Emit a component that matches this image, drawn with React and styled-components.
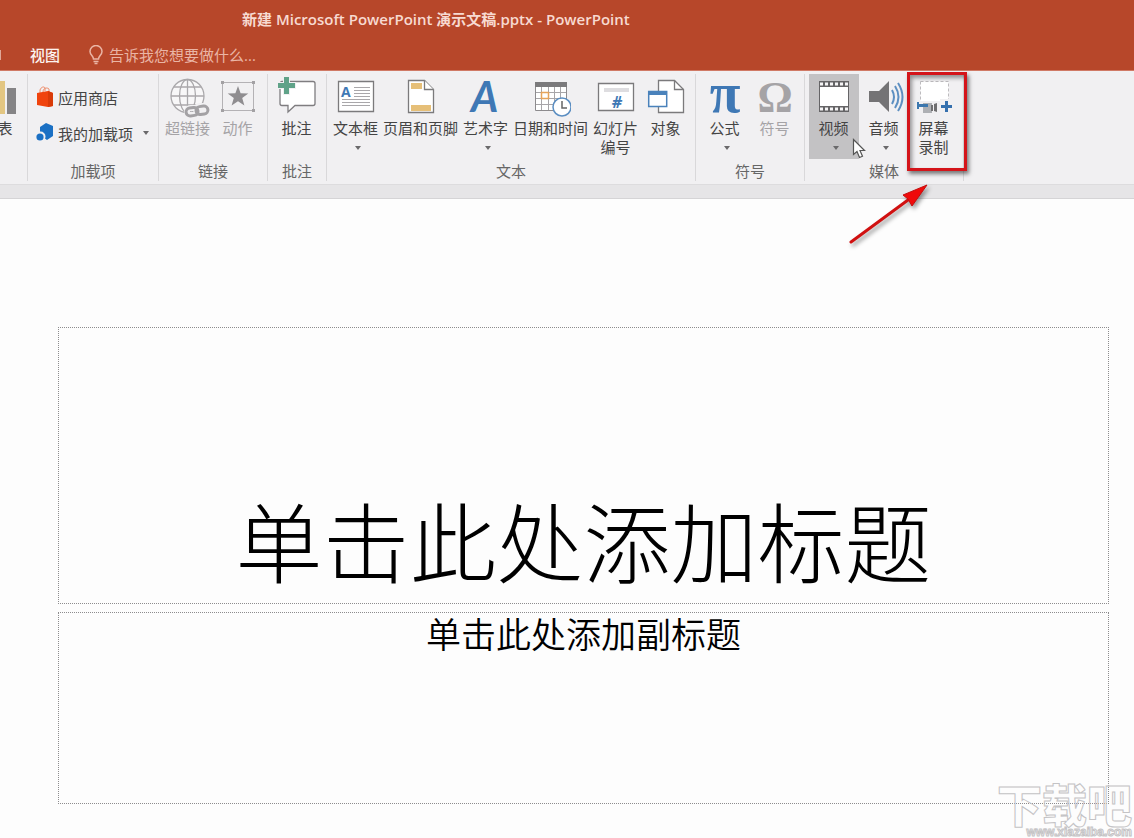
import React from "react";
import styled, { createGlobalStyle } from "styled-components";

const GlobalStyle = createGlobalStyle`
  * {
    box-sizing: border-box;
  }
  body {
    margin: 0;
    background-color: #fdfdfd;
    font-family: "Open Sans", "Noto Sans CJK SC", sans-serif;
    font-size: 15px;
    color: #444;
    overflow-x: hidden;
  }
  button,
  input {
    font: inherit;
    color: inherit;
    border: 0;
    padding: 0;
    background: none;
  }
`;

const BLUE = "#3f78b5";
const GRAY = "#7b7a7c";

const ChartIcon = () => (
  <svg width="40" height="40" viewBox="0 0 40 40" fill="none">
    <path d="M16 2h11v33H16z" fill="#e3c682" />
    <path d="M29 9h9v26h-9z" fill="#858486" />
  </svg>
);

const StoreIcon = () => (
  <svg width="18" height="22" viewBox="0 0 18 22" fill="none">
    <path d="M4 7V4c1-3 4-4 5-2v3M7 6c0-4 4-5 6-3v3" stroke="#ee8a68" />
    <path d="M1 7l11-2 5 2v13l-5 1-11-2z" fill="#f0430d" />
    <path d="M12 5l5 2v13l-5 1z" fill="#d93a08" />
  </svg>
);

const AddinIcon = () => (
  <svg width="18" height="22" viewBox="0 0 18 22">
    <path d="M10 1l7 3v10l-6 4-7-5V5z" fill="#1b70c4" />
    <circle cx="4.500" cy="14.500" r="5" fill="#f1f0f2" />
    <circle cx="4" cy="15" r="3.600" fill="#1b70c4" />
  </svg>
);

const GlobeIcon = () => (
  <svg width="40" height="40" viewBox="0 0 40 40" fill="none" overflow="visible">
    <g stroke="#aaa8ab" strokeWidth="1.300">
      <circle cx="19.500" cy="17" r="16.500" fill="#f8f7f8" />
      <ellipse cx="19.500" cy="17" rx="8" ry="16.500" />
      <path d="M19.500 .5v33M3 17h33M6 8h27M6 26h27" />
    </g>
    <g stroke="#f1f0f2" strokeWidth="6">
      <rect x="19" y="29" width="12" height="7" rx="3.500" />
      <rect x="28" y="27" width="12" height="7" rx="3.500" />
    </g>
    <g stroke="#a3a1a4" strokeWidth="3" transform="rotate(-8 29 32)">
      <rect x="18" y="28" width="12" height="8" rx="4" />
      <rect x="28" y="28" width="12" height="8" rx="4" />
    </g>
  </svg>
);

const ActionIcon = () => (
  <svg width="40" height="40" viewBox="0 0 40 40">
    <path d="M4.500 3.500h31v28h-31z" fill="none" stroke="#b4b2b5" />
    <path d="M3 2h3v3H3zM34 2h3v3h-3zM3 30h3v3H3zM34 30h3v3h-3z" fill="#a3a1a4" />
    <path
      d="M20 7l2.600 7.200 7.700.2-6.100 4.700 2.200 7.400L20 22.200l-6.400 4.300 2.200-7.400-6.100-4.700 7.700-.2z"
      fill="#8f8d90"
    />
  </svg>
);

const CommentIcon = () => (
  <svg width="40" height="40" viewBox="0 0 40 40" overflow="visible">
    <path
      d="M5 2.500h31a2 2 0 0 1 2 2v20a2 2 0 0 1-2 2H18l-7 6.500v-6.500H5a2 2 0 0 1-2-2v-20a2 2 0 0 1 2-2z"
      fill="#fff"
      stroke="#7f7d80"
      strokeWidth="1.300"
    />
    <path d="M6-3h7v6h6v7h-6v6H6v-6H0V3h6z" fill="#f1f0f2" />
    <path d="M7-2h5v6h6v5h-6v6H7V9H1V4h6z" fill="#5fa288" />
  </svg>
);

const TextBoxIcon = () => (
  <svg width="40" height="40" viewBox="0 0 40 40">
    <path d="M2.500 2.500h35v30h-35z" fill="#fff" stroke={GRAY} strokeWidth="1.300" />
    <path
      d="M18 8.500h16M18 11.500h16M18 14.500h16M18 17.500h16M6 20.500h28M6 23.500h28M6 26.500h28"
      stroke="#a9a7aa"
    />
    <text x="5" y="18" fontSize="14" fontWeight="700" fontFamily="Open Sans" fill={BLUE}>
      A
    </text>
  </svg>
);

const HeaderIcon = () => (
  <svg width="40" height="40" viewBox="0 0 40 40">
    <path d="M7.500 1.500h16l9 9v23h-25z" fill="#fff" stroke={GRAY} strokeWidth="1.300" />
    <path d="M23.500 1.500v9h9" fill="#fff" stroke={GRAY} strokeWidth="1.300" />
    <path d="M10 4h11v6H10zM10 26h20v6H10z" fill="#e6bf78" />
  </svg>
);

const WordArtIcon = () => (
  <svg width="40" height="40" viewBox="0 0 40 40" overflow="visible">
    <text
      x="5"
      y="33"
      fontSize="42"
      fontWeight="700"
      fontStyle="italic"
      fontFamily="Lato"
      fill={BLUE}
    >
      A
    </text>
  </svg>
);

const DateIcon = () => (
  <svg width="40" height="40" viewBox="0 0 40 40">
    <path d="M4.500 3.500h31v28h-31z" fill="#fff" stroke="#8d8b8e" />
    <path d="M4 3h32v5H4z" fill={GRAY} />
    <path d="M10.500 8v23M17.500 8v23M23.500 8v23M29.500 8v23M5 13.500h30M5 19.500h30M5 25.500h30" stroke="#a7a5a8" />
    <path d="M10.500 13.500h7v6h-7z" fill="#fff" stroke="#e6a45b" strokeWidth="1.500" />
    <circle cx="31" cy="28" r="9" fill="#fff" stroke="#5b8ec2" strokeWidth="1.500" />
    <path d="M31 22v7h5" fill="none" stroke="#666" strokeWidth="1.500" />
  </svg>
);

const SlideNumberIcon = () => (
  <svg width="40" height="40" viewBox="0 0 40 40">
    <path d="M2.500 4.500h35v27h-35z" fill="#fff" stroke={GRAY} strokeWidth="1.300" />
    <path d="M8 9h25v4H8z" fill="#dedde0" />
    <text
      x="21"
      y="29"
      textAnchor="middle"
      fontSize="16"
      fontWeight="700"
      fontStyle="italic"
      fontFamily="Open Sans"
      fill={BLUE}
    >
      #
    </text>
  </svg>
);

const ObjectIcon = () => (
  <svg width="40" height="40" viewBox="0 0 40 40">
    <path d="M12.500 1.500h16l9 9v23h-25z" fill="#fff" stroke={GRAY} strokeWidth="1.300" />
    <path d="M28.500 1.500v9h9" fill="none" stroke={GRAY} strokeWidth="1.300" />
    <path d="M2.700 12.500h18v15h-18z" fill="#fff" stroke="#4a82bb" strokeWidth="1.500" />
    <path d="M2 12h19v4H2z" fill="#4a82bb" />
  </svg>
);

const SymbolIcon = ({ char, color }) => (
  <svg width="40" height="40" viewBox="0 0 40 40" overflow="visible">
    <text
      x="20"
      y="33"
      textAnchor="middle"
      fontSize={char === "π" ? 56 : 44}
      fontWeight="700"
      fontFamily="Liberation Serif"
      fill={color}
    >
      {char}
    </text>
  </svg>
);

const VideoIcon = () => (
  <svg width="40" height="40" viewBox="0 0 40 40">
    <path d="M5 2h30v31H5z" fill="#656466" />
    <path d="M6 8h28v19H6z" fill="#fff" />
    <path d="M6 5h28M6 30h28" stroke="#f5f4f5" strokeWidth="3" strokeDasharray="3 2" />
  </svg>
);

const AudioIcon = () => (
  <svg width="40" height="40" viewBox="0 0 40 40" fill="none">
    <path d="M5 12h10L25 2v31L15 23H5z" fill="#747375" />
    <path d="M28 11q4 7 0 14M31 7q7 11 0 22M34 4q9 14 0 28" stroke="#5d8fc1" strokeWidth="2" />
  </svg>
);

const RecordIcon = () => (
  <svg width="40" height="40" viewBox="0 0 40 40">
    <path d="M6.500 2.500h28v26h-28z" fill="#fff" stroke="#bdbbbe" strokeDasharray="3 2" />
    <path d="M2 22h24v12H2z" fill="#f1f0f2" />
    <path d="M9 24h9v10H9z" fill="#aeb0b4" />
    <path d="M3 23h2v2h9v3H5v2H3z" fill="#3c77ae" />
    <path d="M17 26h2v6h-2zM20 25l3-1v9l-3-1z" fill="#6f6e70" />
    <path d="M26 20h14v15H26z" fill="#f1f0f2" />
    <path d="M31 22h3v4h4v3h-4v4h-3v-4h-4v-3h4z" fill="#3570ae" />
  </svg>
);

const Caret = () => (
  <svg width="8" height="4" viewBox="0 0 8 4">
    <path d="M1 0h6L4 4z" fill="#6a696b" />
  </svg>
);

const groups = [
  {
    label: "链接",
    items: [
      { text: ["超链接"], icon: <GlobeIcon />, disabled: true },
      { text: ["动作"], icon: <ActionIcon />, disabled: true },
    ],
  },
  { label: "批注", items: [{ text: ["批注"], icon: <CommentIcon /> }] },
  {
    label: "文本",
    items: [
      { text: ["文本框"], icon: <TextBoxIcon />, caret: true },
      { text: ["页眉和页脚"], icon: <HeaderIcon /> },
      { text: ["艺术字"], icon: <WordArtIcon />, caret: true },
      { text: ["日期和时间"], icon: <DateIcon /> },
      { text: ["幻灯片", "编号"], icon: <SlideNumberIcon /> },
      { text: ["对象"], icon: <ObjectIcon /> },
    ],
  },
  {
    label: "符号",
    items: [
      { text: ["公式"], icon: <SymbolIcon char="π" color={BLUE} />, caret: true },
      { text: ["符号"], icon: <SymbolIcon char="Ω" color="#a5a3a6" />, disabled: true },
    ],
  },
  {
    label: "媒体",
    items: [
      { text: ["视频"], icon: <VideoIcon />, caret: true, active: true },
      { text: ["音频"], icon: <AudioIcon />, caret: true },
      { text: ["屏幕", "录制"], icon: <RecordIcon />, marked: true },
    ],
  },
];

const RibbonItem = ({ item }) => (
  <LargeButton type="button" disabled={item.disabled} $active={item.active}>
    {item.icon}
    {item.text.map((line) => (
      <span key={line}>{line}</span>
    ))}
    {item.caret && (
      <CaretLine>
        <Caret />
      </CaretLine>
    )}
    {item.active && (
      <Pointer width="14" height="22" viewBox="0 0 14 22">
        <path
          d="M1.500 1.500v15l3.500-3 2.500 6 3-1.300-2.500-5.700h4.500z"
          fill="#fff"
          stroke="#555"
          strokeWidth="1.200"
        />
      </Pointer>
    )}
    {item.marked && (
      <>
        <Highlight />
        <Arrow width="90" height="70" viewBox="0 0 90 70">
          <path d="M5 61L62 19" stroke="#d01010" strokeWidth="3" strokeLinecap="round" />
          <path d="M81 4L57 14l5 4 4 7z" fill="#f00a0a" stroke="#c40d0d" />
        </Arrow>
      </>
    )}
  </LargeButton>
);

export default function App() {
  return (
    <>
      <GlobalStyle />
      <header>
        <TitleBar>新建 Microsoft PowerPoint 演示文稿.pptx - PowerPoint</TitleBar>
        <TabBar>
          <TabEdge />
          <Tab type="button">视图</Tab>
          <Search>
            <svg width="14" height="20" viewBox="0 0 14 20" fill="none" stroke="#eab5a5" strokeWidth="1.500">
              <path d="M4.500 14c0-3-3.500-4-3.500-7.500a6 6 0 0 1 12 0c0 3.500-3.500 4.500-3.500 7.500zM4.500 16.500h5M5.500 18.500h3" />
            </svg>
            <input aria-label="告诉我您想要做什么" placeholder="告诉我您想要做什么..." />
          </Search>
        </TabBar>
      </header>
      <Ribbon>
        <ClippedGroup>
          <LargeButton type="button">
            <ChartIcon />
            <span>图表</span>
          </LargeButton>
        </ClippedGroup>
        <Group>
          <SmallButtons>
            <SmallButton type="button">
              <StoreIcon />
              应用商店
            </SmallButton>
            <SmallButton type="button">
              <AddinIcon />
              我的加载项
              <CaretGap>
                <Caret />
              </CaretGap>
            </SmallButton>
          </SmallButtons>
          <GroupLabel>加载项</GroupLabel>
        </Group>
        {groups.map((group) => (
          <Group key={group.label}>
            <Items>
              {group.items.map((item) => (
                <RibbonItem key={item.text[0]} item={item} />
              ))}
            </Items>
            <GroupLabel>{group.label}</GroupLabel>
          </Group>
        ))}
      </Ribbon>
      <Strip />
      <Slide>
        <TitleBox>
          <h1>单击此处添加标题</h1>
        </TitleBox>
        <SubtitleBox>
          <p>单击此处添加副标题</p>
        </SubtitleBox>
        <Watermark>
          <strong>下载吧</strong>
          <span>www.xiazaiba.com</span>
        </Watermark>
      </Slide>
    </>
  );
}

const TitleBar = styled.div`
  height: 40px;
  padding-left: 242px;
  background-color: #b7472a;
  color: #f7dad1;
  line-height: 38px;
  font-weight: 600;
  white-space: nowrap;
`;

const TabBar = styled.nav`
  display: flex;
  align-items: center;
  height: 31px;
  background-color: #b7472a;
  border-bottom: 1px solid #d07a66;
`;

const TabEdge = styled.span`
  width: 1px;
  height: 10px;
  background-color: #e0a797;
`;

const Tab = styled.button`
  padding: 0 29px;
  line-height: 28px;
  color: #fdf3ef;
  font-weight: 500;
`;

const Search = styled.label`
  display: flex;
  align-items: center;
  gap: 6px;
  input {
    width: 160px;
    line-height: 20px;
    outline: none;
  }
  input::placeholder {
    color: #eab5a5;
    opacity: 1;
  }
`;

const Ribbon = styled.section`
  display: flex;
  padding: 3px 0;
  background-color: #f1f0f2;
`;

const Group = styled.div`
  display: flex;
  flex-direction: column;
  flex-shrink: 0;
  padding: 0 4px;
  border-right: 1px solid #d9d8da;
`;

const ClippedGroup = styled(Group)`
  width: 28px;
  align-items: flex-end;
  overflow: hidden;
`;

const Items = styled.div`
  display: flex;
`;

const LargeButton = styled.button`
  position: relative;
  display: flex;
  flex-direction: column;
  flex-shrink: 0;
  align-items: center;
  min-width: 50px;
  height: 85px;
  padding: 5px 3px 0 2px;
  line-height: 19px;
  white-space: nowrap;
  background-color: ${(props) => (props.$active ? "#c3c2c4" : "transparent")};
  &:disabled {
    color: #a5a3a6;
  }
`;

const CaretLine = styled.span`
  display: flex;
  align-items: center;
  height: 19px;
  padding-left: 4px;
`;

const CaretGap = styled.span`
  display: flex;
  padding-left: 5px;
`;

const SmallButtons = styled.div`
  display: flex;
  flex-direction: column;
  gap: 8px;
  height: 85px;
  padding-top: 9px;
`;

const SmallButton = styled.button`
  display: flex;
  align-items: center;
  gap: 4px;
  height: 28px;
  padding: 0 4px;
`;

const GroupLabel = styled.div`
  margin-top: 3px;
  line-height: 19px;
  text-align: center;
  color: #666;
`;

const Pointer = styled.svg`
  position: absolute;
  left: 43px;
  top: 64px;
`;

const Highlight = styled.span`
  position: absolute;
  top: -2px;
  left: -2px;
  width: 60px;
  height: 99px;
  border: 3px solid #d4141a;
  box-shadow: 2px 3px 4px rgba(0, 0, 0, 0.5), inset 2px 3px 4px rgba(0, 0, 0, 0.4);
`;

const Arrow = styled.svg`
  position: absolute;
  top: 107px;
  left: -63px;
  z-index: 1;
  filter: drop-shadow(2px 3px 2px rgba(0, 0, 0, 0.4));
`;

const Strip = styled.div`
  height: 15px;
  background-color: #e6e5e7;
  border-top: 1px solid #dddcde;
  border-bottom: 1px solid #d5d4d6;
`;

const Slide = styled.main`
  position: relative;
  display: flex;
  flex-direction: column;
  gap: 8px;
  padding: 128px 25px 34px 58px;
  color: #000;
  text-align: center;
  font-family: "Noto Sans CJK SC", sans-serif;
`;

const TitleBox = styled.div`
  display: flex;
  align-items: flex-end;
  justify-content: center;
  min-height: 277px;
  border: 1px dotted #8d8c8e;
  h1 {
    margin: 0 0 14px;
    font-size: 87px;
    font-weight: 300;
    line-height: 100px;
  }
`;

const SubtitleBox = styled.div`
  min-height: 192px;
  border: 1px dotted #8d8c8e;
  p {
    margin: 0;
    font-size: 35px;
    font-weight: 350;
    line-height: 40px;
  }
`;

const Watermark = styled.div`
  position: absolute;
  right: 2px;
  bottom: 0;
  display: flex;
  flex-direction: column;
  align-items: flex-end;
  color: transparent;
  strong {
    font-size: 45px;
    font-weight: 900;
    line-height: 44px;
    -webkit-text-stroke: 1px #c4c3c5;
  }
  span {
    font-family: "Liberation Sans", sans-serif;
    font-size: 12px;
    font-weight: 700;
    line-height: 12px;
    color: #fff;
    -webkit-text-stroke: 1px #c4c3c5;
  }
`;
